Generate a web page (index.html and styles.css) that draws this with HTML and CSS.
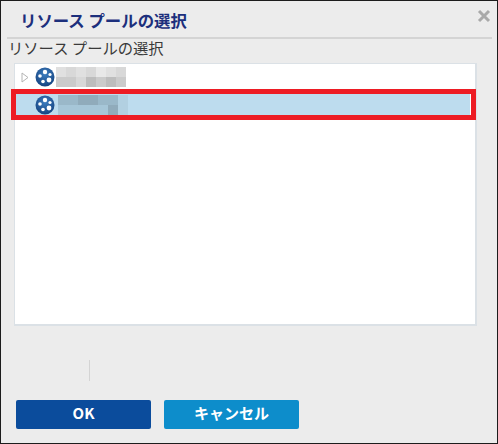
FILE: index.html
```html
<!DOCTYPE html>
<html lang="ja">
<head>
  <meta charset="UTF-8">
  <title>リソース プールの選択</title>
  <link rel="stylesheet" href="styles.css">
</head>
<body>
  <div class="dialog">
    <div class="dialog-head">
      <h1>リソース プールの選択</h1>
      <svg class="close" width="14" height="14" viewBox="0 0 14 14">
        <path d="M2 2 L12 12 M12 2 L2 12" stroke="#a9a9a9" stroke-width="3"/>
      </svg>
    </div>
    <div class="label">リソース プールの選択</div>
    <div class="tree">
      <div class="tree-row">
        <svg class="arrow" width="8" height="11" viewBox="0 0 8 11">
          <path d="M1 1 L7 5.5 L1 10 Z" fill="#fff" stroke="#b4b4b4"/>
        </svg>
        <svg class="pool" width="20" height="20" viewBox="0 0 20 20">
          <use href="#pool-icon"/>
        </svg>
        <div class="mosaic">
          <i class="c1"></i><i class="c2"></i><i class="c1"></i><i class="c2"></i><i class="c0"></i><i class="c1"></i><i class="c2"></i>
          <i class="c3"></i><i class="c3"></i><i class="c2"></i><i class="c4"></i><i class="c3"></i><i class="c4"></i><i class="c3"></i>
        </div>
      </div>
      <div class="tree-row selected">
        <svg class="pool" width="20" height="20" viewBox="0 0 20 20">
          <use href="#pool-icon"/>
        </svg>
        <div class="mosaic dark">
          <i class="d2"></i><i class="d2"></i><i class="d3"></i><i class="d3"></i><i class="d2"></i><i class="d2"></i><i class="d0"></i>
          <i class="d1"></i><i class="d1"></i><i class="d1"></i><i class="d1"></i><i class="d1"></i><i class="d3"></i><i class="d0"></i>
        </div>
      </div>
      <div class="highlight"></div>
    </div>
    <div class="spacer"><span class="tick"></span></div>
    <div class="actions">
      <button class="btn btn-ok">OK</button>
      <button class="btn btn-cancel">キャンセル</button>
    </div>
  </div>

  <svg width="0" height="0" class="defs">
    <defs>
      <radialGradient id="pool-fill" cx="50%" cy="35%" r="70%">
        <stop offset="0" stop-color="#3f7fc0"/>
        <stop offset="1" stop-color="#123f7c"/>
      </radialGradient>
      <g id="pool-icon">
        <circle cx="10" cy="10" r="9.5" fill="url(#pool-fill)"/>
        <circle cx="10" cy="5" r="2.2" fill="#fff"/>
        <circle cx="15" cy="7.5" r="1.6" fill="#fff"/>
        <circle cx="14" cy="13" r="2.4" fill="#fff"/>
        <circle cx="8" cy="14.5" r="1.8" fill="#fff"/>
        <circle cx="5" cy="9" r="1.8" fill="#fff"/>
      </g>
    </defs>
  </svg>
</body>
</html>
```

FILE: styles.css
```css
html, body {
  margin: 0;
  padding: 0;
  background: #ececec;
}

.defs {
  position: absolute;
}

.dialog {
  box-sizing: border-box;
  width: 498px;
  height: 444px;
  background: #ececec;
  border: 1px solid #1c1c1c;
  font-family: "Noto Sans CJK JP", "Noto Sans", sans-serif;
  display: flex;
  flex-direction: column;
}

.dialog-head {
  display: flex;
  align-items: center;
  justify-content: space-between;
  height: 36px;
  margin: 0 5px 0 6px;
  padding: 0 1px 0 13px;
  border-bottom: 2px solid #d4d4d4;
}

.dialog-head h1 {
  margin: 0;
  padding-top: 2px;
  font-size: 16.4px;
  font-weight: 700;
  color: #1c2f7c;
}

.close {
  margin: 0 0 6px;
}

.label {
  margin: 0 0 1px 7px;
  height: 23px;
  line-height: 17px;
  font-size: 15.3px;
  color: #3a3a3a;
}

.tree {
  position: relative;
  box-sizing: border-box;
  width: 463px;
  height: 263px;
  margin-left: 13px;
  padding-top: 1px;
  background: #fff;
  border: 2px solid #dbe1e6;
  border-width: 1px 2px 2px 1px;
}

.tree-row {
  display: flex;
  align-items: center;
  height: 24px;
  padding-left: 6px;
}

.tree-row.selected {
  height: 21px;
  margin: 5px 5px 0 1px;
  padding-left: 5px;
  background: #bddcee;
}

.arrow {
  margin-right: 6px;
}

.pool {
  flex: none;
}

.tree-row.selected .pool {
  margin-left: 14px;
}

.mosaic {
  display: grid;
  grid-template-columns: repeat(7, 10px);
  grid-auto-rows: 10px;
  margin-left: 1px;
}

.mosaic.dark {
  margin-left: 3px;
}

.c0 { background: #e8e8e8; }
.c1 { background: #e0e0e0; }
.c2 { background: #d8d8d8; }
.c3 { background: #cbcbcb; }
.c4 { background: #bdbdbd; }
.d0 { background: #b2d0e1; }
.d1 { background: #a6c6d8; }
.d2 { background: #9ab8c9; }
.d3 { background: #90abbb; }

.highlight {
  position: absolute;
  box-sizing: border-box;
  left: -4px;
  top: 25px;
  width: 465px;
  height: 31px;
  border: 5px solid #ed1c24;
}

.spacer {
  flex: 1;
  padding: 34px 0 0 88px;
}

.tick {
  display: block;
  width: 1px;
  height: 21px;
  background: #d4d4d4;
}

.actions {
  display: flex;
  gap: 13px;
  padding: 0 0 14px 15px;
}

.btn {
  width: 135px;
  height: 29px;
  padding: 0 0 5px;
  border: 0;
  border-radius: 2px;
  color: #fff;
  font-family: "Noto Sans CJK JP", "Noto Sans", sans-serif;
  font-size: 15px;
  font-weight: 700;
}

.btn-ok {
  background: #0b4c9c;
}

.btn-cancel {
  background: #0d8dcb;
}
```
